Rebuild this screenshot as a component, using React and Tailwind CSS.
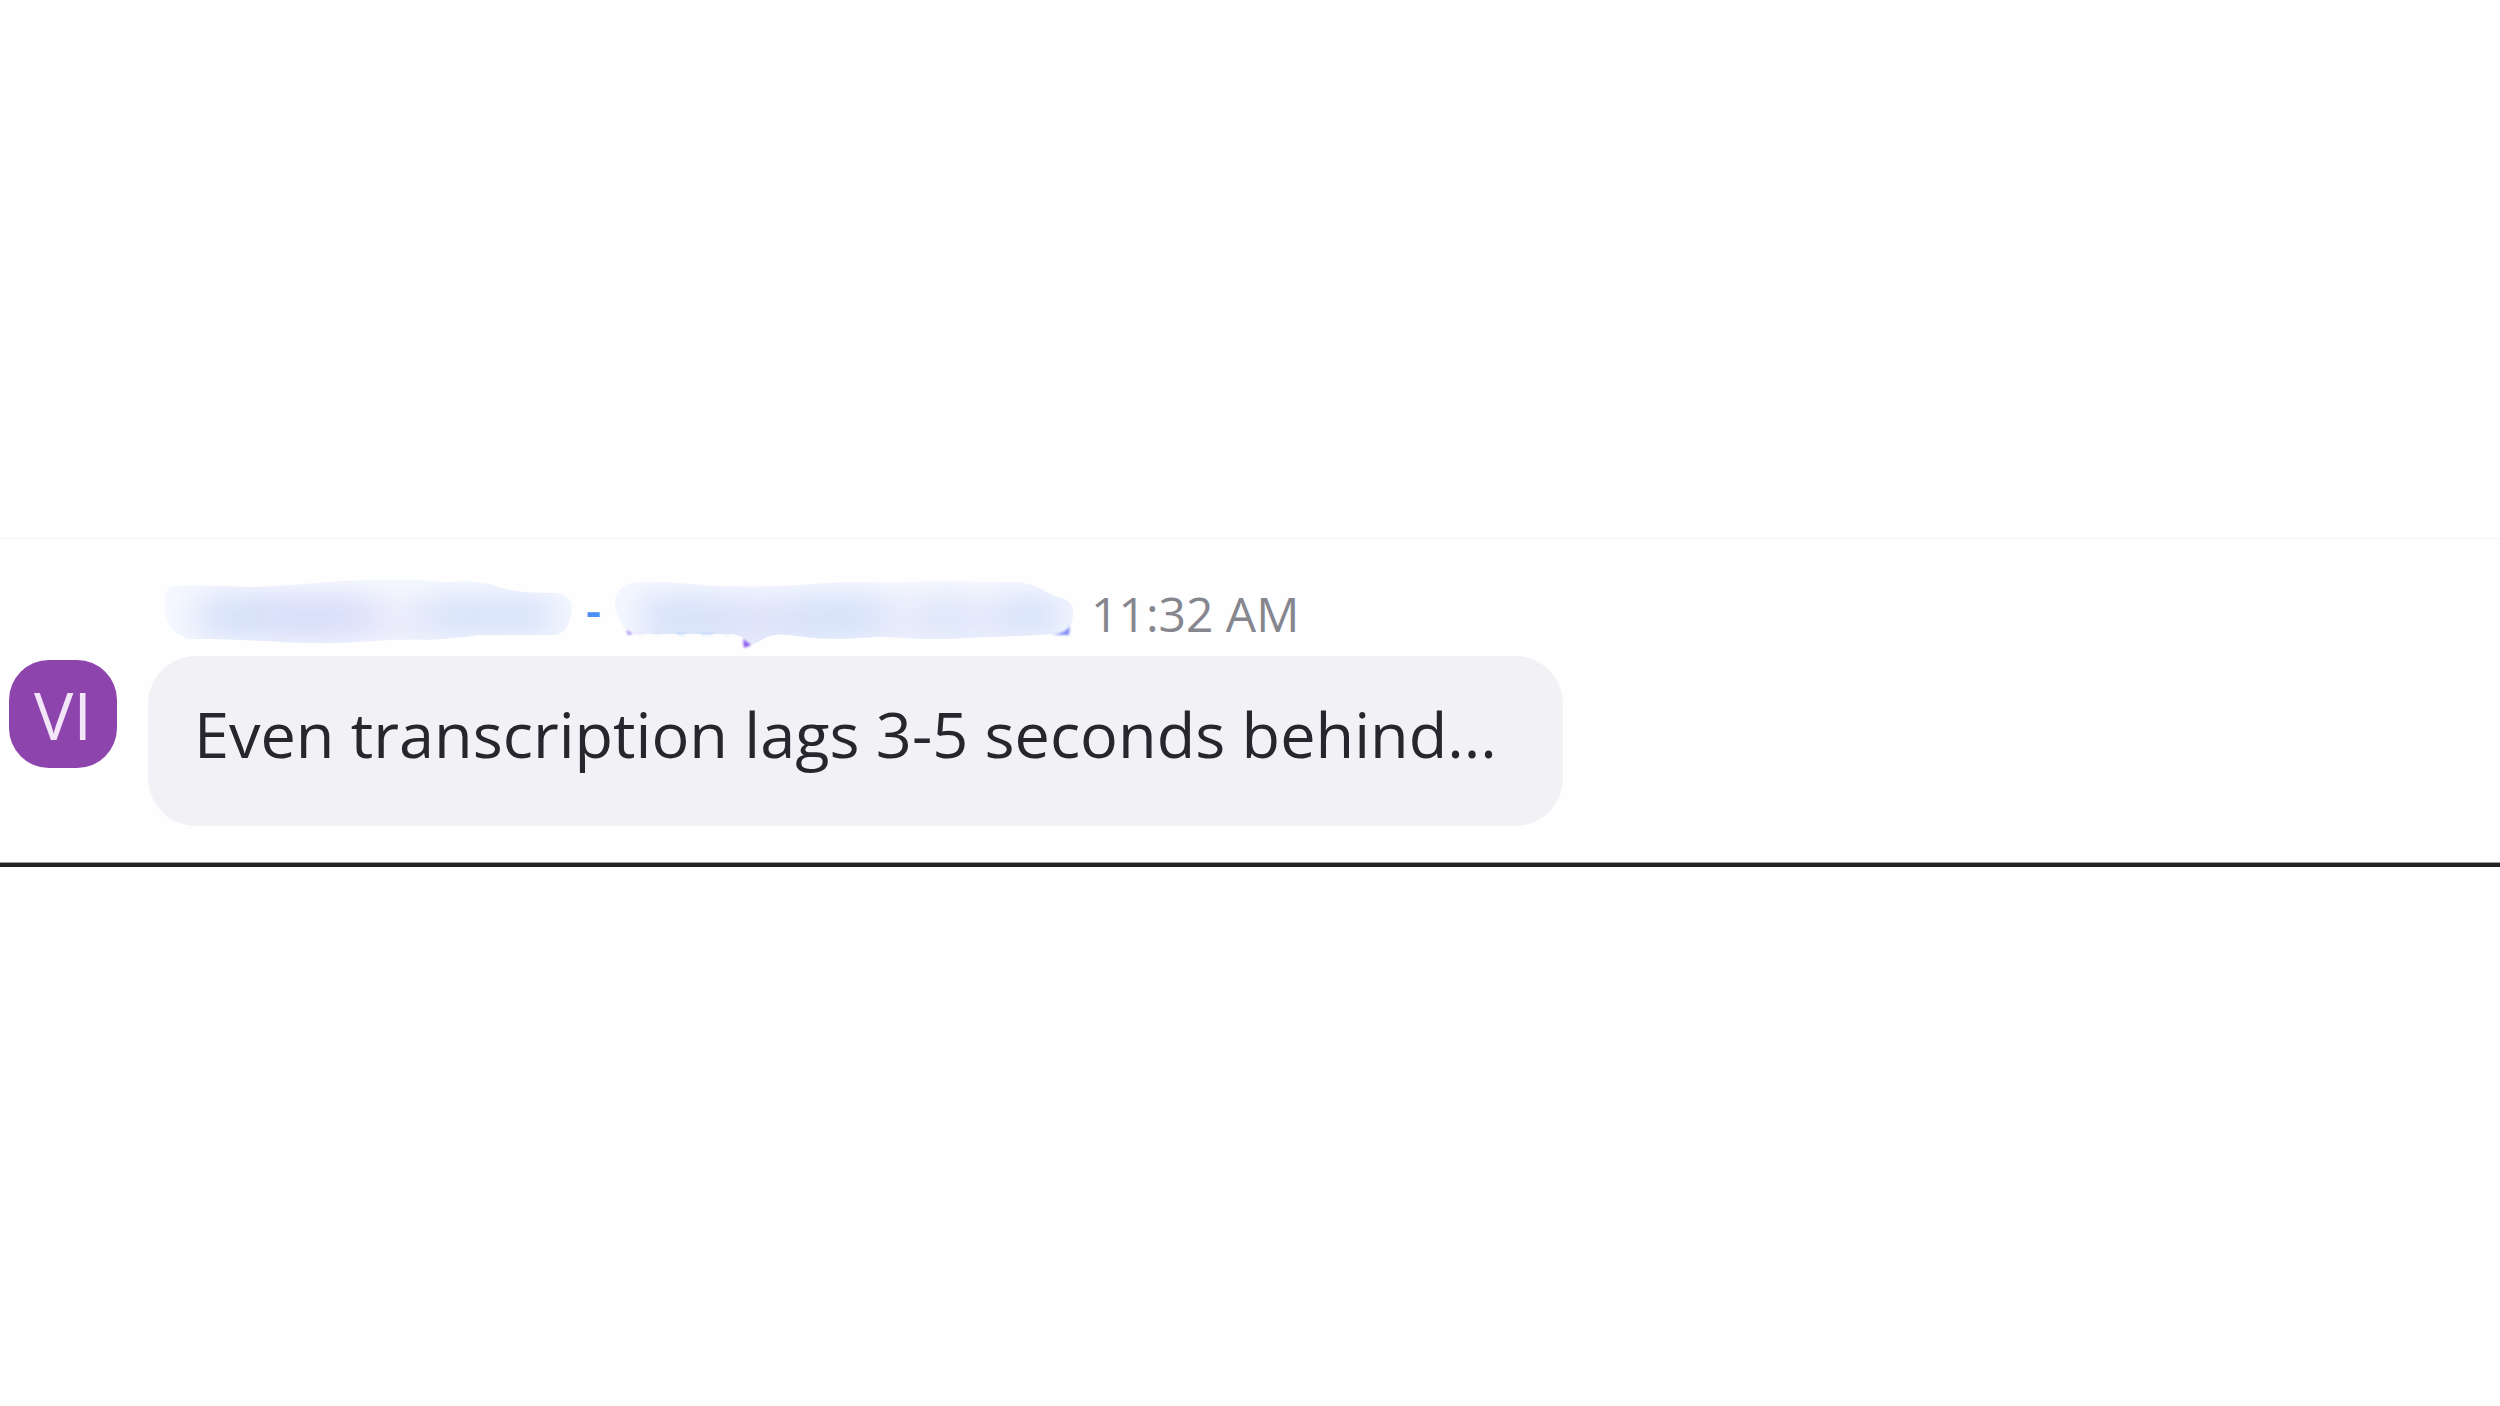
const message = {
  initials: "VI",
  time: "11:32 AM",
  text: "Even transcription lags 3-5 seconds behind...",
};

// Painted-over first part of the sender name
function FirstSmudge() {
  return (
    <svg width="408" height="72" viewBox="0 0 408 72" className="shrink-0" aria-hidden="true">
      <defs>
        <clipPath id="first-clip">
          <path d="M8 8C30 7 55 8 90 9C115 8 140 6 165 4C200 1 245 1 280 4C300 3 320 3 335 9C350 14 365 15 390 15C402 16 408 22 408 31C406 45 402 54 393 57H315C295 60 280 61 262 62C225 60 195 66 150 65C115 65 90 61 26 61C12 57 2 49 2 35C-1 24 -1 13 8 8Z" />
        </clipPath>
        <filter id="first-blur" x="-50%" y="-100%" width="200%" height="300%" colorInterpolationFilters="sRGB">
          <feGaussianBlur stdDeviation="20 12" />
        </filter>
      </defs>
      <g clipPath="url(#first-clip)">
        <rect width="408" height="72" fill="#f7f9ff" />
        <g filter="url(#first-blur)">
          <rect x="34" y="14" width="86" height="50" fill="#d8e2f9" />
          <rect x="110" y="14" width="104" height="50" fill="#dadffa" />
          <rect x="206" y="22" width="60" height="46" fill="#ecedfb" />
          <rect x="258" y="14" width="134" height="48" fill="#dbe5fa" />
        </g>
      </g>
    </svg>
  );
}

// Painted-over second part, with bits of the lettering left along the bottom
function SecondSmudge() {
  return (
    <svg width="460" height="72" viewBox="0 0 460 72" className="shrink-0" aria-hidden="true">
      <defs>
        <clipPath id="second-clip">
          <path d="M16 5C50 3 70 6 100 8C140 9 170 8 200 6C230 3 265 6 300 4C330 2 370 5 400 4C425 6 430 16 447 20C455 23 458 27 458 34C458 46 455 51 448 55C420 58 380 59 350 60C310 63 290 59 260 59C220 62 200 61 175 57C160 55 152 58 143 64L134 68L127 59L118 56H14C6 46 0 36 0 25C0 16 5 8 16 5Z" />
        </clipPath>
        <filter id="second-blur" x="-50%" y="-100%" width="200%" height="300%" colorInterpolationFilters="sRGB">
          <feGaussianBlur stdDeviation="18 12" />
        </filter>
        <filter id="bits-blur" colorInterpolationFilters="sRGB">
          <feGaussianBlur stdDeviation="1" />
        </filter>
      </defs>
      <g clipPath="url(#second-clip)">
        <rect width="460" height="72" fill="#f6f8ff" />
        <g filter="url(#second-blur)">
          <rect x="26" y="15" width="94" height="53" fill="#d9e3fa" />
          <rect x="110" y="17" width="80" height="55" fill="#dfe4fa" />
          <rect x="180" y="14" width="90" height="52" fill="#d8e3fa" />
          <rect x="265" y="18" width="50" height="50" fill="#e9ecfb" />
          <rect x="310" y="15" width="40" height="51" fill="#dde6fa" />
          <rect x="345" y="18" width="46" height="50" fill="#e5eafb" />
          <rect x="388" y="14" width="60" height="48" fill="#dae4fa" />
        </g>
      </g>
      <g filter="url(#bits-blur)">
        <path d="M11 52L18 56L13 57Z" fill="#a98bef" />
        <path d="M20 56H28" stroke="#e6dcfc" strokeWidth="1" />
        <path d="M40 56H46" stroke="#d8d6fc" strokeWidth="1" />
        <path d="M62 56H70M86 56H98" stroke="#9cc8fb" strokeWidth="1" />
        <path d="M108 56H116" stroke="#e0d6fc" strokeWidth="1" />
        <path d="M128 61L136 67L129 70Z" fill="#8a5cec" />
        <path d="M436 57C445 56 451 54 455 48L454 57Z" fill="#7d8ff6" />
      </g>
    </svg>
  );
}

function Message({ initials, time, text }) {
  return (
    <article className="border-t border-b-4 border-t-[#f3f3f4] border-b-[#222222] bg-[#fefefe] pb-[37px] pl-[9px] shadow-[inset_0_-1px_#9a9a9a]">
      <div className="grid grid-cols-[108px_1fr] gap-x-[31px]">
        <header className="col-start-2 flex items-start pt-[39px] pb-[6px] pl-4">
          <FirstSmudge />
          <span className="w-[43px] text-center text-[48px] leading-[64px] font-semibold text-[#4a90f5]">-</span>
          <SecondSmudge />
          <time className="ml-4 text-[48px] leading-[72px] text-[#86868f]">{time}</time>
        </header>

        <div className="mt-1 flex size-[108px] items-center justify-center rounded-[40px] bg-[#8e44ad] text-[66px] leading-none text-[#f3e6f8]">
          {initials}
        </div>

        <p className="w-fit rounded-[48px] bg-[#f2f1f6] pt-[30px] pr-[66px] pb-[44px] pl-[46px] text-[63px] leading-[96px] text-[#26262c]">
          {text}
        </p>
      </div>
    </article>
  );
}

export default function App() {
  return (
    <main className="flex min-h-screen flex-col justify-center bg-[#fefefe] pb-px font-['Open_Sans','Noto_Sans',sans-serif]">
      <Message {...message} />
    </main>
  );
}
